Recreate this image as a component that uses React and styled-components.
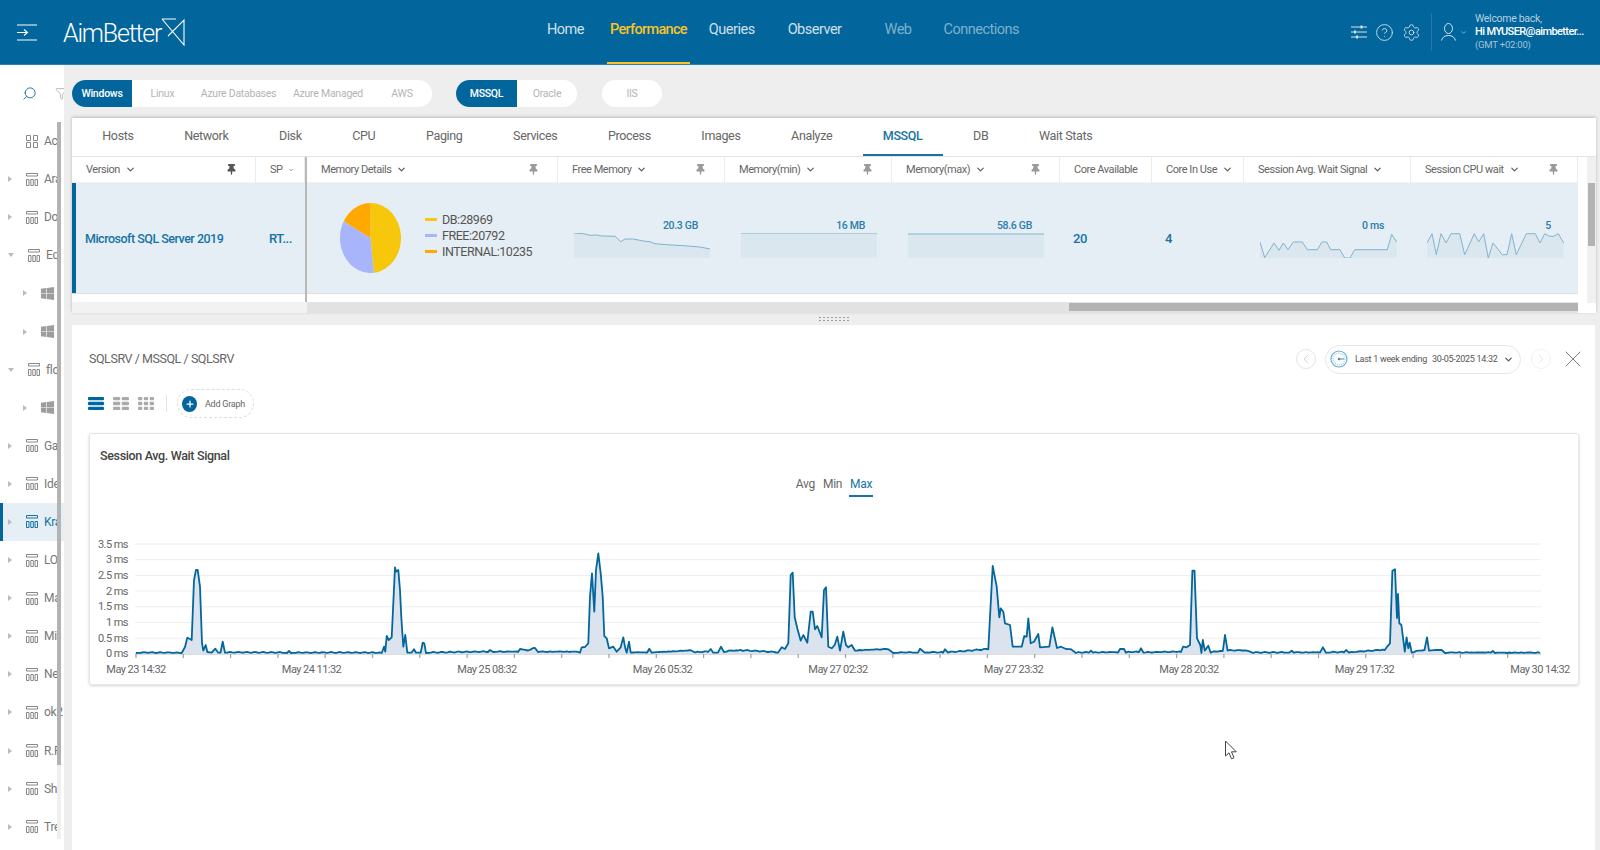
import React from "react";
import styled, { createGlobalStyle } from "styled-components";
import { ChevronDown, ChevronLeft, ChevronRight, CircleHelp, Filter, Plus, Search, Settings, X } from "lucide-react";
import { FaThumbtack, FaWindows } from "react-icons/fa";

const BLUE = "#02659b";
const TEXT_BLUE = "#1673a4";

const GlobalStyle = createGlobalStyle`
  html, body {
    margin: 0;
    height: 100%;
    overflow: hidden;
  }
  body {
    font-family: Roboto, "Liberation Sans", sans-serif;
    color: #555;
    background: #fff;
  }
  * {
    box-sizing: border-box;
  }
`;

const navItems = [
  { label: "Home", gap: 0 },
  { label: "Performance", gap: 20, active: true },
  { label: "Queries", gap: 16 },
  { label: "Observer", gap: 27 },
  { label: "Web", gap: 37, dim: true },
  { label: "Connections", gap: 26, dim: true },
];

const tabs = ["Hosts", "Network", "Disk", "CPU", "Paging", "Services", "Process", "Images", "Analyze", "MSSQL", "DB", "Wait Stats"];

const tree = [
  { name: "Ac", kind: "grid" },
  { name: "Ara", kind: "table", arrow: "right" },
  { name: "Do", kind: "table", arrow: "right" },
  { name: "Eq", kind: "table", arrow: "down" },
  { kind: "win" },
  { kind: "win" },
  { name: "flo", kind: "table", arrow: "down" },
  { kind: "win" },
  { name: "Ga", kind: "table", arrow: "right" },
  { name: "Ide", kind: "table", arrow: "right" },
  { name: "Kra", kind: "table", arrow: "right", active: true },
  { name: "LO", kind: "table", arrow: "right" },
  { name: "Ma", kind: "table", arrow: "right" },
  { name: "Mi", kind: "table", arrow: "right" },
  { name: "Ne", kind: "table", arrow: "right" },
  { name: "ok2", kind: "table", arrow: "right" },
  { name: "R.F", kind: "table", arrow: "right" },
  { name: "Sh", kind: "table", arrow: "right" },
  { name: "Tre", kind: "table", arrow: "right" },
];

const freeMem = [[0,0],[9.3,.7],[16,2.3],[22.7,2],[27.7,3],[41,3.3],[46.7,8.7],[51,6],[59.3,6],[69.3,8],[76,8.7],[81,10.7],[92.7,11.7],[109.3,12.7],[126,14],[136,16]];
const minMem = [[0,0],[136,0]];
const maxMem = [[0,1],[136,1]];
const avgWait = [[0,9],[4.7,24.7],[14,10],[19,17.3],[23.3,10],[28,16.7],[33.3,9],[42.3,9],[47.3,16.7],[57.3,16.7],[62,9],[66.7,9],[70.7,16.7],[80,16.7],[84.7,25],[90,25],[94.7,16.7],[127.3,16.7],[131.7,1.3],[136.7,9]];
const cpuWait = [[0,10],[5,.7],[9.3,21.7],[14,.7],[19,10],[24,.7],[32.7,.7],[37.7,21.7],[47.3,.7],[51.7,9],[56.7,.7],[61.3,25],[66,10],[75.3,21.7],[80,21.7],[84.7,.7],[89.3,21.7],[99.3,.7],[108.3,.7],[113,10],[117.7,.7],[122.3,3.3],[126.7,3.3],[131.3,.7],[136.7,10]];

// page coordinates, traced from the graph
const series = [
  [136,653],[181.7,653],[185,647],[187.3,637.7],[190,639],[191.7,640],[194,580],[196,570],[197.7,570],[200,586.7],[202,643],[203.3,650.7],[205.7,645],[207.3,652],[211.7,652.7],[215.3,648.7],[218.3,652.7],[220.5,652.7],[222.7,641.7],[225,652.7],
  [287,653],[289,651],[291,653],[381.7,653],[384,646.7],[385.3,651.7],[386.7,636],[388.7,640],[391.7,637.3],[395,567.3],[396,571.7],[398.3,570],[400,590],[401.3,617.3],[403.3,646.7],[405.3,635],[407.3,652.7],[411.5,652.7],[414,649.3],[416,652.7],[420.7,652.7],[422.7,642.7],[424.3,643.3],[426,653],
  [488,652],[490,650],[493,652],[518,652],[520,649],[528,650.5],[535,648],[538,652],[578,652],[580,652.7],[581.7,647.3],[585,647],[588.3,643.3],[590,596.7],[592,573.3],[594.3,611.7],[596,570],[598.3,553.3],[600.7,573.3],[602.7,596.7],[604.3,636],[606.7,638.3],[609,648.3],[613.3,646.7],[616.7,651.7],[620.7,647.3],[623.3,637.3],[625.3,648.3],[626.7,652.7],[629,641.7],[630.7,652.7],
  [647,652.7],[649.3,648.7],[651.7,652.7],[691.7,650.7],[695,652.5],[708,652],[710.7,649],[713.3,652.7],[718,652.7],[721,646.7],[724,652],[738,650.5],[778,652.7],[781.7,647.3],[785,649],[788.3,643.3],[790.7,575],[792.7,572.7],[794.7,617.3],[797.3,628.3],[800.7,640.7],[803.3,635],[807.3,642.7],[810.7,611.7],[812.7,611.7],[815,629.3],[817.3,626],[821.7,637.3],[824,590],[826,587.3],[828.3,646.7],[831.7,648.3],[834.7,645],[837.3,636.7],[840,650.7],[843.3,631.7],[846,645],[848.3,647.3],[851.7,645],[855,650.7],[888.3,649.3],[893.3,653],
  [918,652.7],[920,648.7],[925,652.7],[943,652.7],[945,649.3],[948,652.7],[981.7,650],[988.3,649.3],[992.7,566],[996.7,586.7],[999.3,617.3],[1000.7,608.3],[1003.3,611.7],[1005,623.3],[1010,625],[1012.7,646.7],[1021.7,646.7],[1024.3,636],[1026.7,636.7],[1028.3,618.3],[1030.7,643.3],[1034,641.7],[1038.3,634],[1040,647.3],[1049.3,646.7],[1052.4,627.3],[1057,648],[1061,646.7],[1066,649],[1073,650.7],[1076,653],
  [1089,652.7],[1091,650.7],[1093,652.7],[1118,652.5],[1120,649],[1124,649],[1126,652.7],[1139,652],[1141,648.3],[1143.5,652.7],[1181,652],[1183,646.7],[1186.5,647.3],[1190,645],[1192.4,570.7],[1194.5,570.7],[1197,638.3],[1200.3,645],[1201.4,653],[1202.8,640],[1204.8,650.7],[1208.3,645.7],[1210.7,652.7],[1222.8,651],[1225,635],[1227.6,650.7],[1247,650.7],[1253,653],
  [1289,652.7],[1291.7,650.7],[1294,652.7],[1320,652.7],[1322.8,647.3],[1326,652.7],[1344,652.5],[1346,650],[1349,652.7],[1384.8,650],[1390,643.3],[1392.4,570.7],[1395,569.3],[1397,618],[1398,594],[1399.3,623.3],[1401.4,625],[1404.8,651.7],[1406.6,637.3],[1408.3,648.3],[1409.7,642.7],[1411.7,652.7],[1424.5,650],[1427,637.3],[1429,650.7],[1441.7,650],[1445,653],[1491,652.7],[1492.8,651],[1495,653],[1540,653],
];

// long quiet stretches get a little noise, the graph is never quite flat
const withNoise = (points) => {
  const out = [];
  points.forEach(([x, y], i) => {
    out.push([x, y]);
    const next = points[i + 1];
    if (next && next[0] - x > 5 && y > 648) {
      for (let px = x + 2.4; px < next[0] - 1; px += 2.4) {
        const t = (px - x) / (next[0] - x);
        const base = y + (next[1] - y) * t;
        out.push([px, base - Math.abs(Math.sin(px * 1.7) * Math.cos(px * 0.37)) * 1.0]);
      }
    }
  });
  return out;
};

const toPath = (points) => points.map(([x, y], i) => `${i ? "L" : "M"}${x.toFixed(1)} ${y.toFixed(1)}`).join(" ");

const chartPoints = withNoise(series);
const yLabels = ["3.5 ms", "3 ms", "2.5 ms", "2 ms", "1.5 ms", "1 ms", "0.5 ms", "0 ms"];
const xLabels = ["May 23 14:32", "May 24 11:32", "May 25 08:32", "May 26 05:32", "May 27 02:32", "May 27 23:32", "May 28 20:32", "May 29 17:32", "May 30 14:32"];
const ticks = Array.from({ length: 30 }, (_, i) => 136 + i * 47.3).filter((x) => x < 1541);

const Page = styled.div`
  position: relative;
  width: 1600px;
  height: 850px;
  overflow: hidden;
  display: flex;
  flex-direction: column;
`;

const Header = styled.header`
  height: 65px;
  flex: none;
  background: ${BLUE};
  border-bottom: 1px solid #2b82b2;
  display: flex;
  align-items: center;
  color: #fff;
`;

const Brand = styled.div`
  width: 544px;
  flex: none;
  display: flex;
  align-items: center;
  padding-left: 17px;
`;

const LogoText = styled.span`
  font-size: 25px;
  font-weight: 300;
  letter-spacing: -1.2px;
  margin-left: 26px;
  margin-top: 2px;
`;

const Nav = styled.nav`
  display: flex;
  align-self: stretch;
`;

const NavItem = styled.a`
  display: flex;
  align-items: center;
  height: 100%;
  padding: 0 3px 4px;
  margin-left: ${(p) => p.$gap}px;
  font-size: 14.5px;
  font-weight: ${(p) => (p.$active ? 500 : 400)};
  letter-spacing: ${(p) => (p.$active ? -0.7 : -0.5)}px;
  color: ${(p) => (p.$active ? "#f7c325" : p.$dim ? "#7fb0cd" : "#cfe0ea")};
  border-bottom: 2px solid ${(p) => (p.$active ? "#f7c325" : "transparent")};
`;

const UserArea = styled.div`
  margin-left: auto;
  display: flex;
  align-items: center;
  height: 100%;
  padding-right: 14px;
`;

const IconGroup = styled.div`
  display: flex;
  align-items: center;
  gap: 8px;
  padding-right: 10px;
  height: 38px;
  border-right: 1px solid #2a78a8;
  color: #d5e5ee;
`;

const UserIcon = styled.div`
  display: flex;
  align-items: center;
  margin-left: 9px;
  color: #d5e5ee;
  gap: 4px;
`;

const UserText = styled.div`
  width: 111px;
  margin-left: 8px;
  display: flex;
  flex-direction: column;
`;

const Welcome = styled.span`
  font-size: 10.5px;
  line-height: 12px;
  letter-spacing: -0.3px;
  color: #b6d0e0;
`;

const UserName = styled.span`
  font-size: 11px;
  line-height: 14px;
  font-weight: 500;
  letter-spacing: -0.6px;
  white-space: nowrap;
`;

const Zone = styled.span`
  font-size: 9.5px;
  line-height: 12px;
  letter-spacing: -0.2px;
  color: #a4c4d8;
`;

const Body = styled.div`
  flex: 1;
  min-height: 0;
  display: flex;
`;

const Sidebar = styled.aside`
  position: relative;
  width: 64px;
  flex: none;
  overflow: hidden;
  background: #fff;
`;

const SearchRow = styled.div`
  height: 57px;
  display: flex;
  align-items: center;
  padding: 0 0 0 22px;
  gap: 18px;
  color: ${TEXT_BLUE};

  svg {
    flex: none;
  }
  svg:first-child {
    transform: scaleX(-1);
  }
  svg:last-child {
    color: #aaa;
  }
`;

const SideScroll = styled.div`
  position: absolute;
  left: 57px;
  top: 57px;
  width: 4px;
  height: 717px;
  background: #efefef;

  &::before {
    content: "";
    display: block;
    height: 643px;
    background: #b3b3b3;
  }
`;

const TreeRow = styled.div`
  height: 38.1px;
  display: flex;
  align-items: center;
  padding-left: ${(p) => (p.$child ? 23 : 8)}px;
  background: ${(p) => (p.$active ? "#e5eff5" : "transparent")};
  border-left: ${(p) => (p.$active ? `3px solid ${BLUE}` : "0 solid transparent")};
  color: ${(p) => (p.$active ? TEXT_BLUE : "#777")};
  white-space: nowrap;
`;

const Arrow = styled.span`
  width: 0;
  height: 0;
  flex: none;
  border-style: solid;
  border-color: transparent;
  ${(p) =>
    p.$dir === "down"
      ? "border-width: 4px 3px 0 3px; border-top-color: #bbb;"
      : p.$dir === "right"
      ? "border-width: 3px 0 3px 4px; border-left-color: #bbb;"
      : "border-width: 0 2px; "}
  margin-right: ${(p) => (p.$child ? 13 : 14)}px;
  margin-left: ${(p) => (p.$active ? -3 : 0)}px;
`;

const TreeName = styled.span`
  font-size: 12px;
  letter-spacing: -0.3px;
  margin-left: 6px;
`;

const Main = styled.main`
  flex: 1;
  min-width: 0;
  display: flex;
  flex-direction: column;
  background: #eee;
  padding-left: 8px;
`;

const FilterBar = styled.div`
  height: 27px;
  margin-top: 15px;
  flex: none;
  display: flex;
`;

const PillGroup = styled.div`
  display: flex;
  height: 27px;
  border-radius: 14px;
  background: #fff;
  overflow: hidden;
  margin-right: ${(p) => p.$after}px;
`;

const Pill = styled.span`
  width: ${(p) => p.$w}px;
  display: flex;
  align-items: center;
  justify-content: center;
  font-size: 10.5px;
  letter-spacing: -0.25px;
  font-weight: ${(p) => (p.$on ? 500 : 400)};
  background: ${(p) => (p.$on ? BLUE : "transparent")};
  color: ${(p) => (p.$on ? "#fff" : "#b4b4b4")};
`;

const TopCard = styled.section`
  width: 1524px;
  height: 195px;
  margin-top: 11px;
  flex: none;
  background: #fff;
  box-shadow: 0 -1px 3px rgba(0, 0, 0, 0.22);
  display: flex;
  flex-direction: column;
`;

const Tabs = styled.div`
  height: 39px;
  flex: none;
  padding-left: 5px;
  display: flex;
  border-bottom: 1px solid #e3e3e3;
`;

const Tab = styled.div`
  position: relative;
  padding: 0 25.3px 3px;
  display: flex;
  align-items: center;
  font-size: 12.5px;
  letter-spacing: -0.35px;
  color: ${(p) => (p.$on ? TEXT_BLUE : "#666")};
  font-weight: ${(p) => (p.$on ? 500 : 400)};

  ${(p) =>
    p.$on &&
    `&::after {
      content: "";
      position: absolute;
      left: 5px;
      right: 5px;
      bottom: 0;
      height: 2px;
      background: ${TEXT_BLUE};
    }`}
`;

const TableWrap = styled.div`
  flex: 1;
  min-height: 0;
  display: flex;
`;

const TableArea = styled.div`
  position: relative;
  width: 1515px;
  flex: none;
`;

const PinnedEdge = styled.div`
  position: absolute;
  left: 233px;
  top: 0;
  bottom: 11px;
  width: 2px;
  background: #b8b8b8;
`;

const GRID = "184px 49px 2px 251px 167px 167px 168px 92px 92px 167px 167px";

const HeadRow = styled.div`
  height: 26px;
  display: grid;
  grid-template-columns: ${GRID};
`;

const HeadCell = styled.div`
  display: flex;
  align-items: center;
  padding: 0 18px 0 14px;
  font-size: 11px;
  letter-spacing: -0.45px;
  color: #666;
  border-right: 1px solid #ececec;
  border-bottom: 1px solid #f1f1f1;
  white-space: nowrap;
`;

const Chevron = styled(ChevronDown)`
  margin-left: 5px;
  flex: none;
  color: #555;
`;

const Pin = styled(FaThumbtack)`
  margin-left: auto;
  flex: none;
  color: ${(p) => (p.$dark ? "#555" : "#9a9a9a")};
`;

const DataRow = styled.div`
  width: 1506px;
  height: 111px;
  display: grid;
  grid-template-columns: ${GRID};
  background: #e5eef4;
  border-bottom: 1px solid #dedede;
`;

const VersionCell = styled.div`
  display: flex;
  align-items: center;
  padding-left: 9px;
  border-left: 4px solid ${BLUE};
  font-size: 12.5px;
  font-weight: 500;
  letter-spacing: -0.5px;
  color: ${TEXT_BLUE};
  white-space: nowrap;
`;

const ValueCell = styled.div`
  display: flex;
  align-items: center;
  padding-left: 13px;
  font-size: 13px;
  font-weight: 500;
  letter-spacing: -0.4px;
  color: ${TEXT_BLUE};
`;

const PieCell = styled.div`
  display: flex;
  align-items: center;
  padding-left: 33px;
`;

const Legend = styled.div`
  margin: 0 0 6px 24px;
  display: flex;
  flex-direction: column;
`;

const LegendItem = styled.div`
  display: flex;
  align-items: center;
  height: 16px;
  font-size: 12.5px;
  letter-spacing: -0.45px;
  color: #555;

  &::before {
    content: "";
    width: 12px;
    height: 3px;
    margin-right: 5px;
    background: ${(p) => p.$color};
  }
`;

const SparkCell = styled.div`
  display: flex;
  flex-direction: column;
  padding: 35px 0 0 16px;
`;

const SparkValue = styled.div`
  width: 124px;
  height: 15px;
  line-height: 15px;
  text-align: right;
  font-size: 10.5px;
  font-weight: 500;
  letter-spacing: -0.3px;
  color: #2a7dab;
`;

const ScrollRow = styled.div`
  width: 1506px;
  height: 11px;
  margin-top: 8px;
  display: flex;
  background: #e2e2e2;
`;

const ScrollLead = styled.div`
  width: 235px;
  background: #f2f2f2;
`;

const ScrollThumb = styled.div`
  width: 509px;
  height: 8px;
  margin: 1px 0 0 762px;
  background: #b3b3b3;
`;

const VScroll = styled.div`
  width: 9px;
  height: 146px;
  background: #f0f0f0;

  &::after {
    content: "";
    display: block;
    width: 7px;
    height: 63px;
    margin: 26px 0 0 1px;
    background: #b3b3b3;
  }
`;

const Splitter = styled.div`
  height: 12px;
  flex: none;
  display: flex;
  justify-content: center;
  align-items: center;
  padding-right: 4px;

  &::after {
    content: "";
    width: 32px;
    height: 6px;
    background-image: radial-gradient(#9c9c9c 0.8px, transparent 1px);
    background-size: 4px 3px;
  }
`;

const Panel = styled.section`
  flex: 1;
  min-height: 0;
  width: 1523px;
  background: #fff;
  padding: 19px 16px 0 17px;
`;

const PanelHead = styled.div`
  height: 30px;
  display: flex;
  align-items: center;
`;

const Crumb = styled.div`
  flex: 1;
  margin-bottom: 2px;
  font-size: 12.5px;
  letter-spacing: -0.45px;
  color: #666;
`;

const RoundBtn = styled.span`
  width: 20px;
  height: 20px;
  flex: none;
  border-radius: 50%;
  border: 1px solid ${(p) => (p.$faint ? "#f2f2f2" : "#e4e4e4")};
  color: ${(p) => (p.$faint ? "#ddd" : "#bdbdbd")};
  display: flex;
  align-items: center;
  justify-content: center;
`;

const RangePill = styled.div`
  width: 196px;
  height: 29px;
  flex: none;
  margin: 0 10px 0 9px;
  padding-left: 4px;
  border: 1px solid #e6e6e6;
  border-radius: 15px;
  display: flex;
  align-items: center;
  font-size: 9px;
  letter-spacing: -0.28px;
  color: #555;
  white-space: nowrap;

  > svg:first-child {
    flex: none;
  }
`;

const RangeText = styled.span`
  margin-left: 7px;
`;

const RangeDate = styled.span`
  margin-left: 5px;
`;

const CloseBtn = styled(X)`
  margin: 0 -8px 0 8px;
  color: #777;
  flex: none;
`;

const Toolbar = styled.div`
  height: 29px;
  margin: 15px 0 0 -1px;
  display: flex;
  align-items: center;
`;

const ViewIcons = styled.div`
  display: flex;
  align-items: center;
  gap: 9px;
  padding-right: 12px;
  border-right: 1px solid #e4e4e4;
  height: 17px;
`;

const AddGraph = styled.div`
  width: 77px;
  height: 29px;
  margin-left: 10px;
  padding-left: 4px;
  border: 1px dashed #dedede;
  border-radius: 15px;
  display: flex;
  align-items: center;
  font-size: 9px;
  letter-spacing: -0.25px;
  color: #666;
`;

const AddCircle = styled.span`
  width: 15px;
  height: 16px;
  border-radius: 50%;
  background: ${BLUE};
  color: #fff;
  display: flex;
  align-items: center;
  justify-content: center;
  margin-right: 8px;
  flex: none;
`;

const ChartCard = styled.div`
  margin-top: 15px;
  width: 1490px;
  height: 252px;
  border: 1px solid #e6e6e6;
  border-radius: 3px;
  box-shadow: 0 1px 3px rgba(0, 0, 0, 0.18);
`;

const ChartTitle = styled.div`
  margin: 14px 0 0 10px;
  line-height: 16px;
  font-size: 12.5px;
  font-weight: 500;
  letter-spacing: -0.35px;
  color: #444;
`;

const Metrics = styled.div`
  margin-top: 11px;
  height: 22px;
  display: flex;
  justify-content: center;
  gap: 6px;
  font-size: 12px;
  letter-spacing: -0.3px;
`;

const Metric = styled.span`
  padding: 0 1px;
  line-height: 18px;
  color: ${(p) => (p.$on ? TEXT_BLUE : "#666")};
  border-bottom: 2px solid ${(p) => (p.$on ? TEXT_BLUE : "transparent")};
`;

const ChartSvg = styled.svg`
  display: block;
  margin-top: 40px;
`;

const AxisText = styled.text`
  font-size: 11px;
  letter-spacing: -0.55px;
  fill: #666;
`;

const Cursor = styled.svg`
  position: absolute;
  left: 1224px;
  top: 740px;
`;

const Burger = () => (
  <svg width="20" height="17" viewBox="0 0 20 17" fill="none" stroke="#fff" strokeWidth="1.1">
    <path d="M0 1h20M0 16h20M0 8.5h10M7 5.5l3.5 3-3.500 3" />
  </svg>
);

const LogoMark = () => (
  <svg width="24" height="28" viewBox="0 0 24 28" fill="none" stroke="#fff" strokeWidth="1.1">
    <path d="M1 1h14M1 1l22 26V2L7 18" />
  </svg>
);

const SlidersIcon = () => (
  <svg width="16" height="14" viewBox="0 0 16 14" fill="none" stroke="currentColor" strokeWidth="1.2">
    <path d="M0 2h16M0 7h16M0 12h16" />
    <path d="M10.500 .5v3M4 5.500v3M6 10.500v3" strokeWidth="2" />
  </svg>
);

const PersonIcon = () => (
  <svg width="15" height="18" viewBox="0 0 15 18" fill="none" stroke="currentColor" strokeWidth="1">
    <ellipse cx="7.500" cy="5.500" rx="4" ry="5" />
    <path d="M.5 17.500c1-3.500 3.500-5 7-5s6 1.500 7 5" />
  </svg>
);

const TableIcon = ({ active }) => (
  <svg width="12" height="13" viewBox="0 0 12 13" fill="none" stroke={active ? TEXT_BLUE : "#888"} strokeWidth="1">
    <path d="M.5 .5h11v2.500H.5z" />
    <path d="M.5 6.500h2.500v6H.5zM4.800 6.500h2.500v6H4.800zM9 6.500h2.500v6H9z" />
  </svg>
);

const GridIcon = () => (
  <svg width="12" height="13" viewBox="0 0 12 13" fill="none" stroke="#888" strokeWidth="1">
    <path d="M.5 .5h4v5h-4zM7.500 .5h4v5h-4zM.5 7.500h4v5h-4zM7.500 7.500h4v5h-4z" />
  </svg>
);

const GaugeIcon = () => (
  <svg width="18" height="18" viewBox="0 0 18 18" fill="none">
    <circle cx="9" cy="9" r="8" stroke="#6aaed0" strokeWidth="1.2" />
    <circle cx="9" cy="9" r="5.800" stroke="#a9d0e4" strokeWidth="1.400" strokeDasharray="1 1" />
    <path d="M9 9h5" stroke="#3d8fb8" strokeWidth="1" />
    <circle cx="9" cy="9" r="1.300" fill="#3d8fb8" />
  </svg>
);

const ViewIcon = ({ cols, rows, color }) => {
  const gap = 1.5;
  const w = (16 - gap * (cols - 1)) / cols;
  const h = (13 - gap * (rows - 1)) / rows;
  const cells = [];
  for (let r = 0; r < rows; r++) {
    for (let c = 0; c < cols; c++) {
      cells.push(<rect key={`${r}-${c}`} x={c * (w + gap)} y={r * (h + gap)} width={w} height={h} rx="1" fill={color} />);
    }
  }
  return (
    <svg width="16" height="13" viewBox="0 0 16 13">
      {cells}
    </svg>
  );
};

const slice = (from, to) => {
  const pt = (deg) => {
    const a = ((deg - 90) * Math.PI) / 180;
    return `${35 + 35 * Math.cos(a)} ${35 + 35 * Math.sin(a)}`;
  };
  return `M35 35L${pt(from)}A35 35 0 ${to - from > 180 ? 1 : 0} 1 ${pt(to)}Z`;
};

const Pie = () => (
  <svg width="61" height="70" viewBox="0 0 70 70" preserveAspectRatio="none">
    <path d={slice(0, 173.8)} fill="#f6c70a" />
    <path d={slice(173.8, 298.6)} fill="#a9b5fb" />
    <path d={slice(298.6, 360)} fill="#ffa900" />
  </svg>
);

const Spark = ({ points }) => {
  const line = toPath(points);
  const last = points[points.length - 1][0];
  return (
    <svg width="137" height="25" viewBox="0 0 137 25">
      <path d={`${line} L${last} 25 L${points[0][0]} 25 Z`} fill="#dae7ef" />
      <path d={line} fill="none" stroke="#82b3cd" strokeWidth="1" />
    </svg>
  );
};

const SparkColumn = ({ value, points }) => (
  <SparkCell>
    <SparkValue>{value}</SparkValue>
    <Spark points={points} />
  </SparkCell>
);

const Head = ({ label, pin, dark, tiny, noArrow }) => (
  <HeadCell>
    {label}
    {!noArrow && <Chevron size={tiny ? 6 : 11} strokeWidth={2.4} />}
    {pin && <Pin size={11} $dark={dark} />}
  </HeadCell>
);

const Chart = () => {
  const line = toPath(chartPoints);
  return (
    <ChartSvg width="1488" height="145" viewBox="0 0 1488 145">
      <g transform="translate(-90 -537)">
        {yLabels.map((label, i) => (
          <g key={label}>
            <line x1="135" x2="1541" y1={544 + i * 15.7} y2={544 + i * 15.7} stroke={i === 7 ? "#a8a8a8" : "#eeeeee"} strokeWidth="1" />
            <AxisText x="128" y={547.5 + i * 15.7} textAnchor="end">
              {label}
            </AxisText>
          </g>
        ))}
        {ticks.map((x) => (
          <line key={x} x1={x} x2={x} y1="654" y2="658" stroke="#a0a0a0" strokeWidth="1.2" />
        ))}
        <path d={`${line} L1540 654 L136 654 Z`} fill="#dbe3ef" />
        <path d={line} fill="none" stroke="#04679b" strokeWidth="1.8" strokeLinejoin="round" />
        {xLabels.map((label, i) => (
          <AxisText key={label} x={136 + i * 175.5} y="673" textAnchor="middle">
            {label}
          </AxisText>
        ))}
      </g>
    </ChartSvg>
  );
};

const App = () => {
  return (
    <Page>
      <GlobalStyle />
      <Header>
        <Brand>
          <Burger />
          <LogoText>AimBetter</LogoText>
          <LogoMark />
        </Brand>
        <Nav>
          {navItems.map((item) => (
            <NavItem key={item.label} $gap={item.gap} $active={item.active} $dim={item.dim}>
              {item.label}
            </NavItem>
          ))}
        </Nav>
        <UserArea>
          <IconGroup>
            <SlidersIcon />
            <CircleHelp size={19} strokeWidth={1.1} />
            <Settings size={19} strokeWidth={1.1} />
          </IconGroup>
          <UserIcon>
            <PersonIcon />
            <ChevronDown size={7} strokeWidth={2} />
          </UserIcon>
          <UserText>
            <Welcome>Welcome back,</Welcome>
            <UserName>Hi MYUSER@aimbetter...</UserName>
            <Zone>(GMT +02:00)</Zone>
          </UserText>
        </UserArea>
      </Header>
      <Body>
        <Sidebar>
          <SearchRow>
            <Search size={15} strokeWidth={1.5} />
            <Filter size={13} strokeWidth={1.5} />
          </SearchRow>
          {tree.map((node, i) => {
            const child = node.kind === "win";
            return (
              <TreeRow key={i} $child={child} $active={node.active}>
                <Arrow $dir={child ? "right" : node.arrow} $child={child} $active={node.active} />
                {child && <FaWindows size={15} color="#9d9d9d" />}
                {node.kind === "table" && <TableIcon active={node.active} />}
                {node.kind === "grid" && <GridIcon />}
                {node.name && <TreeName>{node.name}</TreeName>}
              </TreeRow>
            );
          })}
          <SideScroll />
        </Sidebar>
        <Main>
          <FilterBar>
            <PillGroup $after={24}>
              <Pill $w={60} $on>Windows</Pill>
              <Pill $w={61}>Linux</Pill>
              <Pill $w={91}>Azure Databases</Pill>
              <Pill $w={88}>Azure Managed</Pill>
              <Pill $w={60}>AWS</Pill>
            </PillGroup>
            <PillGroup $after={25}>
              <Pill $w={61} $on>MSSQL</Pill>
              <Pill $w={60}>Oracle</Pill>
            </PillGroup>
            <PillGroup $after={0}>
              <Pill $w={60}>IIS</Pill>
            </PillGroup>
          </FilterBar>
          <TopCard>
            <Tabs>
              {tabs.map((tab) => (
                <Tab key={tab} $on={tab === "MSSQL"}>
                  {tab}
                </Tab>
              ))}
            </Tabs>
            <TableWrap>
              <TableArea>
                <HeadRow>
                  <Head label="Version" pin dark />
                  <Head label="SP" tiny />
                  <span />
                  <Head label="Memory Details" pin />
                  <Head label="Free Memory" pin />
                  <Head label="Memory(min)" pin />
                  <Head label="Memory(max)" pin />
                  <Head label="Core Available" noArrow />
                  <Head label="Core In Use" />
                  <Head label="Session Avg. Wait Signal" />
                  <Head label="Session CPU wait" pin />
                </HeadRow>
                <DataRow>
                  <VersionCell>Microsoft SQL Server 2019</VersionCell>
                  <ValueCell>RT...</ValueCell>
                  <span />
                  <PieCell>
                    <Pie />
                    <Legend>
                      <LegendItem $color="#f6c70a">DB:28969</LegendItem>
                      <LegendItem $color="#a9b5fb">FREE:20792</LegendItem>
                      <LegendItem $color="#ffa900">INTERNAL:10235</LegendItem>
                    </Legend>
                  </PieCell>
                  <SparkColumn value="20.3 GB" points={freeMem} />
                  <SparkColumn value="16 MB" points={minMem} />
                  <SparkColumn value="58.6 GB" points={maxMem} />
                  <ValueCell>20</ValueCell>
                  <ValueCell>4</ValueCell>
                  <SparkColumn value="0 ms" points={avgWait} />
                  <SparkColumn value="5" points={cpuWait} />
                </DataRow>
                <ScrollRow>
                  <ScrollLead />
                  <ScrollThumb />
                </ScrollRow>
                <PinnedEdge />
              </TableArea>
              <VScroll />
            </TableWrap>
          </TopCard>
          <Splitter />
          <Panel>
            <PanelHead>
              <Crumb>SQLSRV / MSSQL / SQLSRV</Crumb>
              <RoundBtn>
                <ChevronLeft size={16} strokeWidth={1} />
              </RoundBtn>
              <RangePill>
                <GaugeIcon />
                <RangeText>Last 1 week ending</RangeText>
                <RangeDate>30-05-2025 14:32</RangeDate>
                <Chevron size={11} strokeWidth={2.6} />
              </RangePill>
              <RoundBtn $faint>
                <ChevronRight size={16} strokeWidth={1} />
              </RoundBtn>
              <CloseBtn size={28} strokeWidth={0.8} />
            </PanelHead>
            <Toolbar>
              <ViewIcons>
                <ViewIcon cols={1} rows={3} color={BLUE} />
                <ViewIcon cols={2} rows={3} color="#aaa" />
                <ViewIcon cols={3} rows={3} color="#aaa" />
              </ViewIcons>
              <AddGraph>
                <AddCircle>
                  <Plus size={10} strokeWidth={3} />
                </AddCircle>
                Add Graph
              </AddGraph>
            </Toolbar>
            <ChartCard>
              <ChartTitle>Session Avg. Wait Signal</ChartTitle>
              <Metrics>
                <Metric>Avg</Metric>
                <Metric>Min</Metric>
                <Metric $on>Max</Metric>
              </Metrics>
              <Chart />
            </ChartCard>
          </Panel>
        </Main>
      </Body>
      <Cursor width="14" height="20" viewBox="0 0 14 20" fill="#fff" stroke="#444" strokeWidth="1">
        <path d="M1.500 1v15l3.500-3.200 2.500 6 2.500-1-2.500-6h4.800z" />
      </Cursor>
    </Page>
  );
};

export default App;
